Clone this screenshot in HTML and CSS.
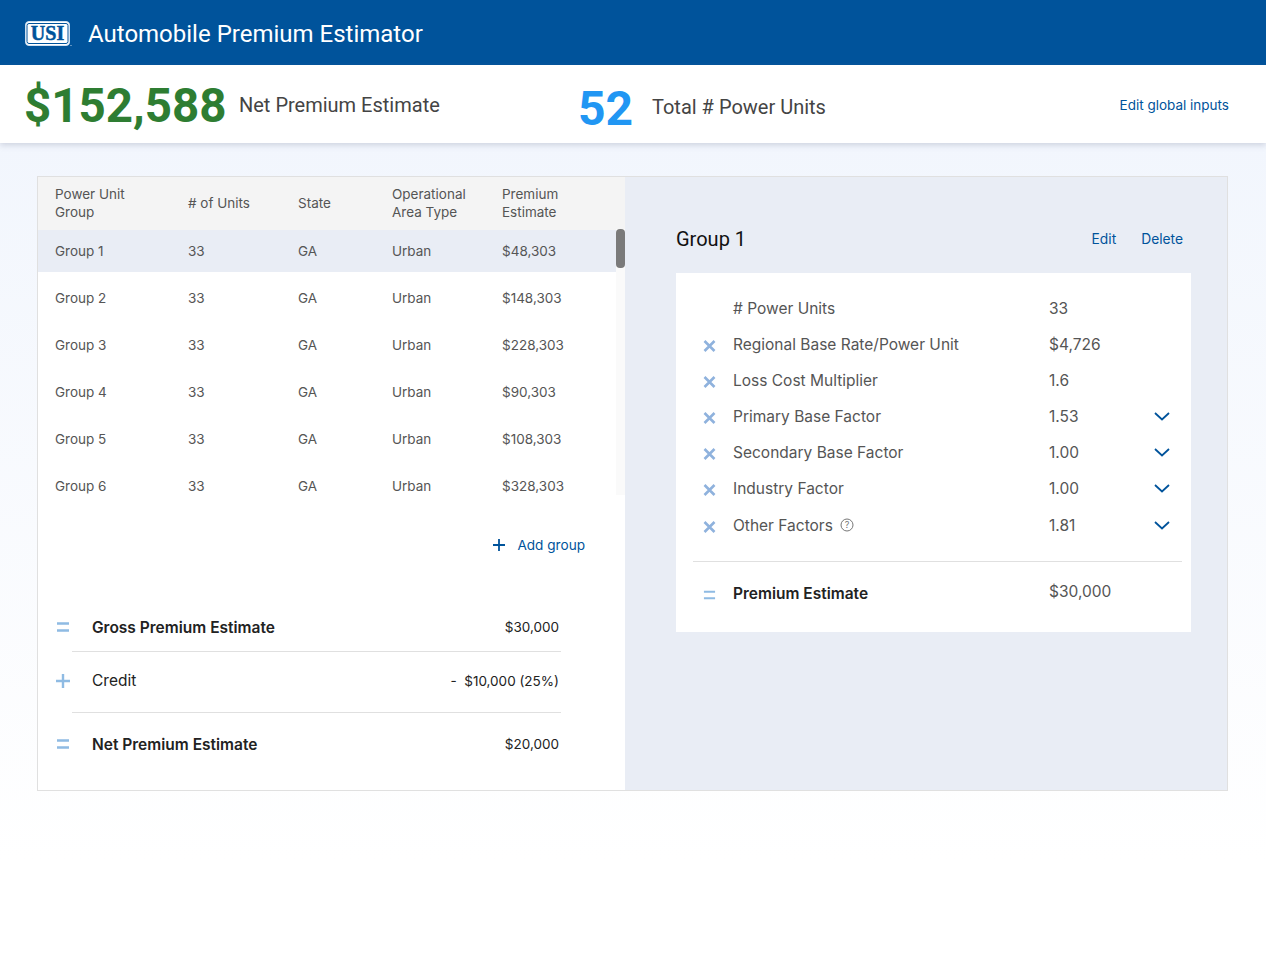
FILE: index.html
```html
<!DOCTYPE html>
<html>
	<head>
		<title>Automobile Premium Estimator</title>
		<link rel="stylesheet" href="styles.css">
	</head>
	<body>
		<header class="topbar">
			<svg class="logo" width="48" height="26" viewBox="0 0 48 26">
				<rect x="0.5" y="0.5" width="44" height="24" rx="3.5" fill="#fff" stroke="#cfe0f0" stroke-width="1"/>
				<rect x="2" y="2.5" width="41" height="20" rx="2" fill="none" stroke="#00539b" stroke-width="1"/>
				<text x="22.5" y="19" text-anchor="middle" class="logo-text">USI</text>
				<circle cx="46" cy="24.5" r="0.6" fill="#cfe0f0"/>
			</svg>
			<h1>Automobile Premium Estimator</h1>
		</header>

		<section class="summary">
			<div class="net-total">$152,588</div>
			<div class="net-label">Net Premium Estimate</div>
			<div class="unit-total">52</div>
			<div class="unit-label">Total # Power Units</div>
			<a class="global-link">Edit global inputs</a>
		</section>

		<main class="panel">
			<section class="left">
				<div class="grid-row grid-head">
					<div>Power Unit<br>Group</div>
					<div># of Units</div>
					<div>State</div>
					<div>Operational<br>Area Type</div>
					<div>Premium<br>Estimate</div>
				</div>
				<div class="grid-body">
					<div class="grid-row selected"><div>Group 1</div><div>33</div><div>GA</div><div>Urban</div><div>$48,303</div></div>
					<div class="grid-row"><div>Group 2</div><div>33</div><div>GA</div><div>Urban</div><div>$148,303</div></div>
					<div class="grid-row"><div>Group 3</div><div>33</div><div>GA</div><div>Urban</div><div>$228,303</div></div>
					<div class="grid-row"><div>Group 4</div><div>33</div><div>GA</div><div>Urban</div><div>$90,303</div></div>
					<div class="grid-row"><div>Group 5</div><div>33</div><div>GA</div><div>Urban</div><div>$108,303</div></div>
					<div class="grid-row"><div>Group 6</div><div>33</div><div>GA</div><div>Urban</div><div>$328,303</div></div>
					<div class="scroll-track"><div class="scroll-thumb"></div></div>
				</div>
				<a class="add-group">
					<svg width="14" height="14" viewBox="0 0 14 14"><path d="M7 1v12M1 7h12" stroke="#00539b" stroke-width="1.8" fill="none"/></svg>
					Add group
				</a>
				<div class="totals">
					<div class="total-row gross">
						<svg class="op" width="14" height="10" viewBox="0 0 14 10"><path d="M1 1.5h12M1 8.5h12" stroke="#8fbbe3" stroke-width="2.4"/></svg>
						<div class="total-name strong">Gross Premium Estimate</div>
						<div class="total-value">$30,000</div>
					</div>
					<div class="total-row credit">
						<svg class="op" width="16" height="16" viewBox="0 0 16 16"><path d="M8 1v14M1 8h14" stroke="#8fbbe3" stroke-width="2.4"/></svg>
						<div class="total-name">Credit</div>
						<div class="total-value">-&nbsp; $10,000 (25%)</div>
					</div>
					<div class="total-row net">
						<svg class="op" width="14" height="10" viewBox="0 0 14 10"><path d="M1 1.5h12M1 8.5h12" stroke="#8fbbe3" stroke-width="2.4"/></svg>
						<div class="total-name strong">Net Premium Estimate</div>
						<div class="total-value">$20,000</div>
					</div>
				</div>
			</section>

			<section class="right">
				<div class="detail-head">
					<h2>Group 1</h2>
					<a>Edit</a>
					<a>Delete</a>
				</div>
				<div class="card">
					<div class="factor">
						<span class="factor-icon"></span>
						<div class="factor-name"># Power Units</div>
						<div class="factor-value">33</div>
					</div>
					<div class="factor">
						<svg class="factor-icon" width="12" height="12" viewBox="0 0 12 12"><path d="M1 1l10 10M11 1L1 11" stroke="#8fb2dd" stroke-width="2.6"/></svg>
						<div class="factor-name">Regional Base Rate/Power Unit</div>
						<div class="factor-value">$4,726</div>
					</div>
					<div class="factor">
						<svg class="factor-icon" width="12" height="12" viewBox="0 0 12 12"><path d="M1 1l10 10M11 1L1 11" stroke="#8fb2dd" stroke-width="2.6"/></svg>
						<div class="factor-name">Loss Cost Multiplier</div>
						<div class="factor-value">1.6</div>
					</div>
					<div class="factor">
						<svg class="factor-icon" width="12" height="12" viewBox="0 0 12 12"><path d="M1 1l10 10M11 1L1 11" stroke="#8fb2dd" stroke-width="2.6"/></svg>
						<div class="factor-name">Primary Base Factor</div>
						<div class="factor-value">1.53</div>
						<svg class="chevron" width="16" height="9" viewBox="0 0 16 9"><path d="M1 1l7 6.5L15 1" stroke="#00539b" stroke-width="1.8" fill="none"/></svg>
					</div>
					<div class="factor">
						<svg class="factor-icon" width="12" height="12" viewBox="0 0 12 12"><path d="M1 1l10 10M11 1L1 11" stroke="#8fb2dd" stroke-width="2.6"/></svg>
						<div class="factor-name">Secondary Base Factor</div>
						<div class="factor-value">1.00</div>
						<svg class="chevron" width="16" height="9" viewBox="0 0 16 9"><path d="M1 1l7 6.5L15 1" stroke="#00539b" stroke-width="1.8" fill="none"/></svg>
					</div>
					<div class="factor">
						<svg class="factor-icon" width="12" height="12" viewBox="0 0 12 12"><path d="M1 1l10 10M11 1L1 11" stroke="#8fb2dd" stroke-width="2.6"/></svg>
						<div class="factor-name">Industry Factor</div>
						<div class="factor-value">1.00</div>
						<svg class="chevron" width="16" height="9" viewBox="0 0 16 9"><path d="M1 1l7 6.5L15 1" stroke="#00539b" stroke-width="1.8" fill="none"/></svg>
					</div>
					<div class="factor last-factor">
						<svg class="factor-icon" width="12" height="12" viewBox="0 0 12 12"><path d="M1 1l10 10M11 1L1 11" stroke="#8fb2dd" stroke-width="2.6"/></svg>
						<div class="factor-name">Other Factors
							<svg class="help" width="14" height="14" viewBox="0 0 14 14"><circle cx="7" cy="7" r="6" fill="none" stroke="#777" stroke-width="1"/><text x="7" y="10" text-anchor="middle" class="help-text">?</text></svg>
						</div>
						<div class="factor-value">1.81</div>
						<svg class="chevron" width="16" height="9" viewBox="0 0 16 9"><path d="M1 1l7 6.5L15 1" stroke="#00539b" stroke-width="1.8" fill="none"/></svg>
					</div>
					<div class="factor result">
						<svg class="factor-icon" width="14" height="10" viewBox="0 0 14 10"><path d="M1 1.5h12M1 8.5h12" stroke="#8fbbe3" stroke-width="2.4"/></svg>
						<div class="factor-name strong">Premium Estimate</div>
						<div class="factor-value">$30,000</div>
					</div>
				</div>
			</section>
		</main>
	</body>
</html>
```

FILE: styles.css
```css
html { height: 100%; }
body {
	margin: 0;
	min-height: 953px;
	font-family: Inter, "Noto Sans", sans-serif;
	color: #555;
	background: linear-gradient(#f2f6fd 143px, #fff 860px);
	background-repeat: no-repeat;
}
a { color: #00539b; }
svg { display: block; }

.topbar {
	height: 65px;
	background: #00539b;
	display: flex;
	align-items: center;
	padding: 2px 0 0 25px;
	box-sizing: border-box;
}
.logo { margin-right: 15px; }
.logo-text {
	font-family: "Liberation Serif", serif;
	font-weight: bold;
	font-size: 20px;
	fill: #00539b;
	stroke: #00539b;
	stroke-width: 0.5px;
}
.topbar h1 {
	margin: 0;
	font-family: Roboto, sans-serif;
	font-weight: 400;
	font-size: 24px;
	color: #fff;
}

.summary {
	height: 78px;
	background: #fff;
	box-shadow: 0 2px 6px rgba(90, 100, 130, 0.25);
	display: flex;
	align-items: center;
	padding: 0 37px 0 24px;
	font-family: Roboto, sans-serif;
}
.net-total {
	font-size: 47.5px;
	font-weight: 700;
	color: #2e7d32;
	width: 215px;
	margin-top: 4px;
}
.net-label {
	font-size: 20px;
	color: #444;
	width: 339px;
	margin-top: 2px;
}
.unit-total {
	font-size: 48px;
	font-weight: 700;
	color: #2196f3;
	width: 74px;
	margin-top: 8px;
}
.unit-label { font-size: 20px; color: #444; flex: 1; margin-top: 6px; }
.global-link { font-family: Inter, sans-serif; font-size: 13.5px; margin-top: 2px; }

.panel {
	margin: 33px 38px 0 37px;
	height: 613px;
	border: 1px solid #e0e0e0;
	display: flex;
	background: #fff;
}
.left { width: 587px; flex: none; }

.grid-row {
	display: grid;
	grid-template-columns: 133px 110px 94px 110px 1fr;
	padding-left: 17px;
	align-items: center;
	font-size: 13.5px;
	height: 47px;
}
.grid-head {
	height: 53px;
	box-sizing: border-box;
	padding-bottom: 2px;
	background: #f4f4f4;
	line-height: 18px;
}
.grid-body { position: relative; height: 266px; }
.grid-row.selected { background: #e9edf5; height: 42px; }
.grid-row.selected + .grid-row { margin-top: 2px; }
.scroll-track {
	position: absolute;
	top: -1px;
	right: 0;
	width: 9px;
	height: 266px;
	background: #fafafa;
}
.scroll-thumb {
	width: 9px;
	height: 39px;
	background: #7a7a7a;
	border-radius: 4px;
}

.add-group {
	display: flex;
	align-items: center;
	justify-content: flex-end;
	gap: 11px;
	font-size: 13.6px;
	margin: 39px 40px 0 0;
	height: 20px;
}

.totals { margin-top: 47px; }
.total-row {
	display: grid;
	grid-template-columns: 54px 1fr auto;
	align-items: center;
	margin-right: 66px;
	position: relative;
	color: #222;
}
.total-row .op { margin-left: 18px; }
.gross { height: 50px; }
.credit { height: 61px; padding-bottom: 4px; box-sizing: border-box; }
.net { height: 62px; }
.credit .op { margin-left: 17px; }
.gross::after, .credit::after {
	content: "";
	position: absolute;
	left: 34px;
	right: -2px;
	bottom: 0;
	border-bottom: 1px solid #e0e0e0;
}
.total-name { font-size: 15.5px; }
.total-value { font-size: 13.5px; }
.strong { font-weight: 600; color: #222; }

.right {
	flex: 1;
	background: #e9edf5;
	padding: 0 36px 0 51px;
}
.detail-head {
	display: flex;
	align-items: center;
	box-sizing: border-box;
	height: 96px;
	padding-top: 28px;
	gap: 25px;
	font-size: 13.8px;
}
.detail-head h2 {
	margin: 0 auto 0 0;
	font-family: Roboto, sans-serif;
	font-weight: 400;
	font-size: 20px;
	color: #111;
}
.detail-head a:last-child { margin-right: 8px; }

.card {
	background: #fff;
	height: 359px;
	box-sizing: border-box;
	padding: 17px 9px 0 17px;
}
.factor {
	display: flex;
	align-items: center;
	height: 36px;
	font-size: 15.5px;
	color: #555;
}
.factor-icon { width: 40px; flex: none; }
svg.factor-icon { width: 13px; margin: 3px 17px 0 10px; flex: none; }
.factor-name {
	width: 316px;
	flex: none;
	display: flex;
	align-items: center;
	gap: 7px;
}
.factor-value { width: 105px; flex: none; }
.chevron { flex: none; }
.help-text { font-family: Inter, sans-serif; font-size: 9px; fill: #777; }
.last-factor { margin-top: 1px; }
.result {
	margin-top: 18px;
	border-top: 1px solid #e0e0e0;
	height: 62px;
}
.result .factor-value { margin-bottom: 3px; }
.result .factor-name { margin-top: 1px; }
```
